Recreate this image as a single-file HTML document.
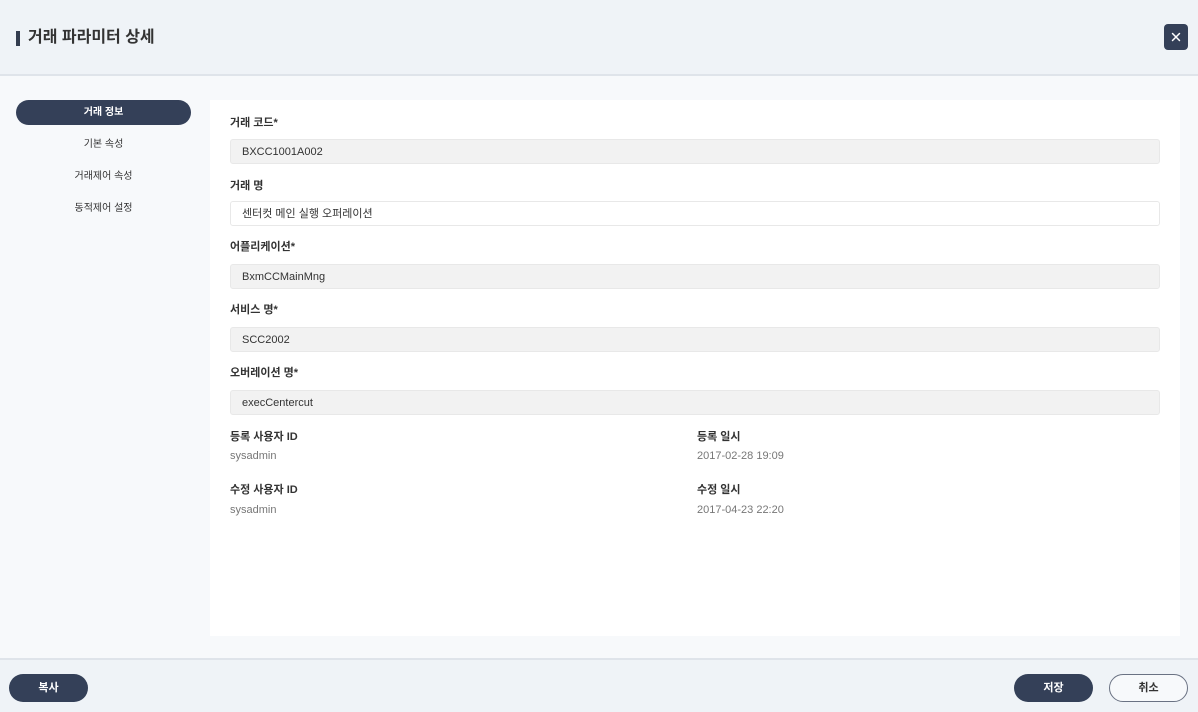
<!DOCTYPE html>
<html><head><meta charset="utf-8"><style>
*{box-sizing:border-box;margin:0;padding:0}
body{width:1198px;height:712px;overflow:hidden;background:#f7f9fb;font-family:"Liberation Sans","Noto Sans CJK KR",sans-serif;position:relative;color:#333}
.hdr{position:absolute;left:0;top:0;width:1198px;height:76px;background:#eff3f7;border-bottom:2px solid #dfe4ea}
.hdr .bar{position:absolute;left:16px;top:31px;width:4px;height:15px;background:#333d4f}
.hdr h1{position:absolute;left:28px;top:28px;font-size:16px;font-weight:bold;color:#333;line-height:20px}
.close{position:absolute;left:1164px;top:24px;width:24px;height:26px;background:#344058;border-radius:4px}
.side{position:absolute;left:16px;top:100px;width:175px}
.side div{height:32px;line-height:26px;text-align:center;font-size:10px;color:#333}
.side .on{background:#344058;color:#fff;border-radius:13px;height:25px;font-weight:bold;margin-bottom:7px}
.main{position:absolute;left:210px;top:100px;width:970px;height:536px;background:#fff}
.lbl{position:absolute;left:20px;font-size:11px;font-weight:bold;color:#333}
.inp{position:absolute;left:20px;width:930px;height:25px;background:#f2f2f2;border:1px solid #e8e8e8;border-radius:3px;font-size:11px;line-height:24px;padding-left:11px;color:#333}
.inp.w{background:#fff}
.val{position:absolute;font-size:11px;color:#777}
.ftr{position:absolute;left:0;top:658px;width:1198px;height:54px;background:#eff3f7;border-top:2px solid #dfe4ea}
.btn{position:absolute;top:674px;height:28px;border-radius:14px;font-size:11px;font-weight:bold;line-height:29px;text-align:center}
.d{background:#344058;color:#fff}
.o{border:1px solid #6a7283;color:#333;background:#f7f9fb;line-height:27px}
</style></head><body>
<div class="hdr"><div class="bar"></div><h1>거래 파라미터 상세</h1>
<div class="close"><svg width="24" height="26"><path d="M8.5 9.5l7 7M15.5 9.5l-7 7" stroke="#fff" stroke-width="1.5" stroke-linecap="round"/></svg></div></div>
<div class="side"><div class="on">거래 정보</div><div>기본 속성</div><div>거래제어 속성</div><div>동적제어 설정</div></div>
<div class="main">
<div class="lbl" style="top:14px">거래 코드*</div><div class="inp" style="top:39px">BXCC1001A002</div>
<div class="lbl" style="top:77px">거래 명</div><div class="inp w" style="top:101px">센터컷 메인 실행 오퍼레이션</div>
<div class="lbl" style="top:138px">어플리케이션*</div><div class="inp" style="top:164px">BxmCCMainMng</div>
<div class="lbl" style="top:201px">서비스 명*</div><div class="inp" style="top:227px">SCC2002</div>
<div class="lbl" style="top:264px">오버레이션 명*</div><div class="inp" style="top:290px">execCentercut</div>
<div class="lbl" style="top:328px">등록 사용자 ID</div><div class="val" style="left:20px;top:350px">sysadmin</div>
<div class="lbl" style="left:487px;top:328px">등록 일시</div><div class="val" style="left:487px;top:350px">2017-02-28 19:09</div>
<div class="lbl" style="top:381px">수정 사용자 ID</div><div class="val" style="left:20px;top:404px">sysadmin</div>
<div class="lbl" style="left:487px;top:381px">수정 일시</div><div class="val" style="left:487px;top:404px">2017-04-23 22:20</div>
</div>
<div class="ftr"></div>
<div class="btn d" style="left:9px;width:79px">복사</div>
<div class="btn d" style="left:1014px;width:79px">저장</div>
<div class="btn o" style="left:1109px;width:79px">취소</div>
</body></html>
